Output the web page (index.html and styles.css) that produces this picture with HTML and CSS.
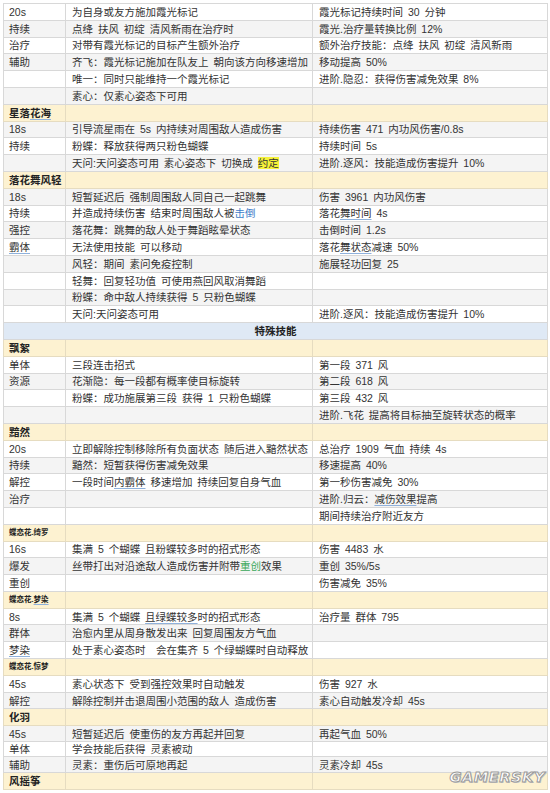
FILE: index.html
```html
<!DOCTYPE html>
<html lang="zh">
<head>
<meta charset="utf-8">
<title>素问技能表</title>
<link rel="stylesheet" href="styles.css">
</head>
<body>
<div class="sheet">
<table class="skills">
<colgroup><col class="c1"><col class="c2"><col class="c3"></colgroup>
<tbody>
<tr><td>20s</td><td>为自身或友方施加霞光标记</td><td>霞光标记持续时间 30 分钟</td></tr>
<tr class="g"><td>持续</td><td>点绛 扶风 初绽 清风新雨在治疗时</td><td>霞光.治疗量转换比例 12%</td></tr>
<tr><td>治疗</td><td>对带有霞光标记的目标产生额外治疗</td><td>额外治疗技能：点绛 扶风 初绽 清风新雨</td></tr>
<tr class="g"><td>辅助</td><td>齐飞：霞光标记施加在队友上 朝向该方向移速增加</td><td>移动提高 50%</td></tr>
<tr><td></td><td>唯一：同时只能维持一个霞光标记</td><td>进阶.隐忍：获得伤害减免效果 8%</td></tr>
<tr class="g"><td></td><td>素心：仅素心姿态下可用</td><td></td></tr>
<tr class="hd"><td>星落<span class="ul">花海</span></td><td></td><td></td></tr>
<tr class="g"><td>18s</td><td>引导流星雨在 5s 内持续对周围敌人造成伤害</td><td>持续伤害 471 内功风伤害/0.8s</td></tr>
<tr><td>持续</td><td>粉蝶：释放获得两只粉色蝴蝶</td><td>持续时间 5s</td></tr>
<tr class="g"><td></td><td>天问:天问姿态可用 素心姿态下 切换成 <span class="mark">约定</span></td><td>进阶.逐风：技能造成伤害提升 10%</td></tr>
<tr class="hd"><td>落花舞风轻</td><td></td><td></td></tr>
<tr class="g"><td>18s</td><td>短暂延迟后 强制周围敌人同自己一起跳舞</td><td>伤害 3961 内功风伤害</td></tr>
<tr><td>持续</td><td>并造成持续伤害 结束时周围敌人被<span class="link">击倒</span></td><td>落花<span class="ul">舞时间</span> 4s</td></tr>
<tr class="g"><td>强控</td><td>落花舞：跳舞的敌人处于舞蹈眩晕状态</td><td>击倒时间 1.2s</td></tr>
<tr><td><span class="ul">霸体</span></td><td>无法使用技能 可以移动</td><td>落花<span class="ul">舞状态</span>减速 50%</td></tr>
<tr class="g"><td></td><td>风轻：期间 素问免疫控制</td><td>施展轻功回复 25</td></tr>
<tr><td></td><td>轻舞：回复轻功值 可使用燕回风取消舞蹈</td><td></td></tr>
<tr class="g"><td></td><td>粉蝶：命中敌人持续获得 5 只粉色蝴蝶</td><td></td></tr>
<tr><td></td><td>天问:天问姿态可用</td><td>进阶.逐风：技能造成伤害提升 10%</td></tr>
<tr class="sec"><td colspan="3">特殊技能</td></tr>
<tr class="hd"><td>飘絮</td><td></td><td></td></tr>
<tr><td>单体</td><td>三段连击招式</td><td>第一段 371 风</td></tr>
<tr class="g"><td>资源</td><td>花渐隐：每一段都有概率使目标旋转</td><td>第二段 618 风</td></tr>
<tr><td></td><td>粉蝶：成功施展第三段 获得 1 只粉色蝴蝶</td><td>第三段 432 风</td></tr>
<tr class="g"><td></td><td></td><td>进阶.飞花 提高将目标抽至旋转状态的概率</td></tr>
<tr class="hd"><td>黯然</td><td></td><td></td></tr>
<tr><td>20s</td><td>立即解除控制移除所有负面状态 随后进入黯然状态</td><td>总治疗 1909 气血 持续 4s</td></tr>
<tr class="g"><td>持续</td><td>黯然：短暂获得伤害减免效果</td><td>移速提高 40%</td></tr>
<tr><td>解控</td><td>一段时间<span class="ul">内霸体</span> 移速增加 持续回复自身气血</td><td>第一秒伤害减免 30%</td></tr>
<tr class="g"><td>治疗</td><td></td><td>进阶.归云：<span class="ul">减伤效果</span>提高</td></tr>
<tr><td></td><td></td><td>期间持续治疗附近友方</td></tr>
<tr class="hd small"><td>蝶恋花.绮罗</td><td></td><td></td></tr>
<tr><td>16s</td><td>集满 5 个蝴蝶 且粉蝶较多时的招式形态</td><td>伤害 4483 水</td></tr>
<tr class="g"><td>爆发</td><td>丝带打出对沿途敌人造成伤害并附带<span class="green">重创</span>效果</td><td>重创 35%/5s</td></tr>
<tr><td>重创</td><td></td><td>伤害减免 35%</td></tr>
<tr class="hd small"><td>蝶恋花.<span class="ul">梦染</span></td><td></td><td></td></tr>
<tr><td>8s</td><td>集满 5 个蝴蝶 <span class="ul">且绿蝶较多</span>时的招式形态</td><td>治疗量 群体 795</td></tr>
<tr class="g"><td>群体</td><td>治愈内里从周身散发出来 回复周围友方气血</td><td></td></tr>
<tr><td><span class="ul">梦染</span></td><td>处于素心姿态时　会在集齐 5 个绿蝴蝶时自动释放</td><td></td></tr>
<tr class="hd small"><td>蝶恋花.惊梦</td><td></td><td></td></tr>
<tr><td>45s</td><td>素心状态下 受到强控效果时自动触发</td><td>伤害 927 水</td></tr>
<tr class="g"><td>解控</td><td>解除控制并击退周围小范围的敌人 造成伤害</td><td>素心自动触发冷却 45s</td></tr>
<tr class="hd"><td>化羽</td><td></td><td></td></tr>
<tr class="g tight"><td>45s</td><td>短暂延迟后 使重伤的友方再起并回复</td><td>再起气血 50%</td></tr>
<tr class="tight"><td>单体</td><td>学会技能后获得 灵素被动</td><td></td></tr>
<tr class="g tight"><td>辅助</td><td>灵素：重伤后可原地再起</td><td>灵素冷却 45s</td></tr>
<tr class="hd"><td>风摇筝</td><td></td><td></td></tr>
</tbody>
</table>
<div class="watermark">GAMERSKY</div>
</div>
</body>
</html>
```

FILE: styles.css
```css
html, body {
  margin: 0;
  padding: 0;
  background: #ffffff;
}

body {
  font-family: "Liberation Sans", "Noto Sans CJK SC", sans-serif;
  font-size: 10.5px;
  color: #333333;
  overflow: hidden;
}

.sheet {
  position: relative;
  padding: 3px 3px 0 3px;
}

.skills {
  border-collapse: collapse;
  table-layout: fixed;
  width: 544px;
}

.c1 { width: 62px; }
.c2 { width: 247px; }
.c3 { width: 235px; }

.skills tr {
  height: 16.8px;
  background: #ffffff;
}

.skills tr.tight {
  height: 15.6px;
}

.skills tr.g {
  background: #f4f4f4;
}

.skills td {
  border: 1px solid #d8d8d8;
  padding: 0 0 0 6px;
  line-height: 14px;
  white-space: nowrap;
  overflow: hidden;
  vertical-align: middle;
  word-spacing: 2px;
}

.skills td:first-child {
  padding-left: 5px;
}

.skills tr.hd {
  background: #fdf2d1;
}

.skills tr.hd td {
  border-color: #e6dcc0;
}

.skills tr.hd td:first-child {
  font-weight: bold;
  color: #222222;
}

.skills tr.small td:first-child {
  font-size: 7.5px;
}

.skills tr.sec {
  background: #dfe9f5;
}

.skills tr.sec td {
  text-align: center;
  font-weight: bold;
  color: #222222;
  padding-left: 0;
}

.ul {
  text-decoration: underline;
  text-decoration-color: #8fb1db;
  text-underline-offset: 2px;
}

.mark {
  background: #f6f23a;
}

.link {
  color: #3d7cc9;
}

.green {
  color: #3aa85a;
}

.watermark {
  position: absolute;
  right: 5px;
  top: 769px;
  font-family: "DejaVu Sans", sans-serif;
  font-weight: bold;
  font-style: italic;
  font-size: 14.5px;
  letter-spacing: 0.6px;
  color: #ffffff;
  -webkit-text-stroke: 1px #9a9a9a;
  text-shadow: 1px 1px 0 #c8c8c8;
}
```
